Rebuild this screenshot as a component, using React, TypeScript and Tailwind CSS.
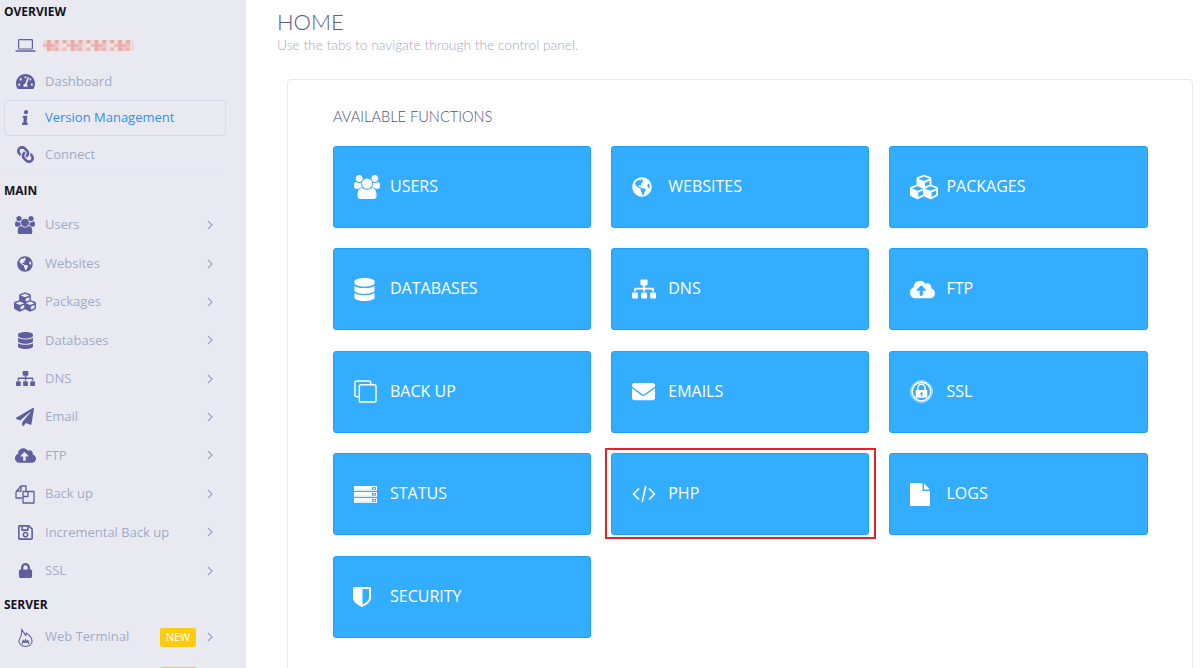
import React from "react";
import {
  FaGlobeAmericas, FaCubes, FaDatabase, FaSitemap, FaCloudUploadAlt, FaEnvelope,
  FaTachometerAlt, FaInfo, FaLink, FaPaperPlane, FaRegSave, FaLock,
} from "react-icons/fa";

const Users = ({ w }: { w: number }) => (
  <svg viewBox="0 0 1920 1792" width={w} height={(w * 1792) / 1920} fill="currentColor">
    <path d="M593 896q-162 5-265 128h-134q-82 0-138-40.5t-56-118.5q0-353 124-353 6 0 43.5 21t97.5 42.5 119 21.5q67 0 133-23-5 37-5 66 0 139 81 256zm1071 637q0 120-73 189.5t-194 69.5h-874q-121 0-194-69.5t-73-189.5q0-53 3.5-103.5t14-109 26.5-108.5 43-97.5 62-81 85.5-53.5 111.5-20q10 0 43 21.5t73 48 107 48 135 21.5 135-21.5 107-48 73-48 43-21.5q61 0 111.5 20t85.5 53.5 62 81 43 97.5 26.5 108.5 14 109 3.5 103.5zm-1024-1277q0 106-75 181t-181 75-181-75-75-181 75-181 181-75 181 75 75 181zm704 384q0 159-112.5 271.5t-271.5 112.5-271.5-112.5-112.5-271.5 112.5-271.5 271.5-112.5 271.5 112.5 112.5 271.5zm576 225q0 78-56 118.5t-138 40.5h-134q-103-123-265-128 81-117 81-256 0-29-5-66 66 23 133 23 59 0 119-21.5t97.5-42.5 43.5-21q124 0 124 353zm-128-609q0 106-75 181t-181 75-181-75-75-181 75-181 181-75 181 75 75 181z" />
  </svg>
);

const Laptop = () => (
  <svg viewBox="0 0 21 13" width="21" height="13" fill="none" stroke="currentColor" strokeWidth="1.2">
    <rect x="3.6" y="0.6" width="13.8" height="9.4" rx="0.8" />
    <path d="M0.5 12h20" strokeWidth="1.5" />
  </svg>
);

const Files = () => (
  <svg viewBox="0 0 20 20" width="20" height="20" fill="none" stroke="currentColor" strokeWidth="1.3" strokeLinejoin="round">
    <path d="M7 14H1V8l5-6h5v5" />
    <path d="M6 2v5H1.5" />
    <path d="M8 7.5h11v11.5H8z" />
    <path d="M13 7.5v5H8" />
  </svg>
);

const Flame = () => (
  <svg viewBox="0 0 16 20" width="15" height="19" fill="none" stroke="currentColor" strokeWidth="1.1" strokeLinejoin="round">
    <path d="M4 1c1 3 3 4 4 7 1-1 1-2 .7-3 3 2 6.3 6 6.3 9 0 3-3 5.500-7 5.500S1 17 1 14c0-2 1-3 2-5 .8-2 1.200-5 1-8z" />
    <path d="M4.500 17l1-4 1.500 2 1-3 1 3 1.500-2 1 4" />
    <path d="M4 15h8" />
  </svg>
);

const BackUp = () => (
  <svg viewBox="0 0 24 24" width="23" height="23" fill="none" stroke="currentColor" strokeWidth="1.500">
    <path d="M4.500 17.500H3a2 2 0 0 1-2-2V3a2 2 0 0 1 2-2h12.500a2 2 0 0 1 2 2v1.500" />
    <rect x="5.500" y="5" width="17.500" height="18" rx="2" />
  </svg>
);

const Status = () => (
  <svg viewBox="0 0 23 17" width="23" height="17">
    {[0.5, 6.5, 12.5].map((y) => (
      <g key={y}>
        <rect x="0.5" y={y} width="22" height="3.8" fill="none" stroke="currentColor" strokeWidth="1" />
        <rect x="1" y={y + 0.5} width="17" height="2.8" fill="currentColor" />
        <rect x="19.5" y={y + 1.2} width="1.5" height="1.5" fill="currentColor" />
      </g>
    ))}
  </svg>
);

const Code = () => (
  <svg viewBox="0 0 24 18" width="24" height="18" fill="none" stroke="currentColor" strokeWidth="1.6">
    <path d="M7 3.500 1.500 9 7 14.500M17 3.500 22.500 9 17 14.500M13.800 1 10.200 17" />
  </svg>
);

const Ssl = () => (
  <svg viewBox="0 0 24 24" width="23" height="23">
    <circle cx="12" cy="12" r="11.5" fill="none" stroke="currentColor" strokeWidth="0.8" opacity="0.75" />
    <circle cx="12" cy="12" r="9.8" fill="none" stroke="currentColor" strokeWidth="1.6" />
    <path d="M8.300 10.800V8.200a3.700 3.700 0 0 1 7.400 0v2.600" fill="none" stroke="currentColor" strokeWidth="1.500" />
    <path fillRule="evenodd" fill="currentColor" d="M6 10.500h12v8H6zM12 12.800a1.300 1.300 0 0 0-.7 2.400v1.700h1.400v-1.700a1.300 1.300 0 0 0-.7-2.400z" />
  </svg>
);

const Shield = () => (
  <svg viewBox="0 0 18 20" width="18" height="20">
    <path fill="currentColor" fillRule="evenodd" d="M0 0h18v11c0 4-5 7.500-9 9-4-1.500-9-5-9-9zM9.500 2v15.500c3-1.400 6.500-3.800 6.500-6.500V2z" />
  </svg>
);

const FileIcon = () => (
  <svg viewBox="0 0 20 23" width="20" height="23" fill="currentColor">
    <path d="M0 0h12.500v8H20v15H0z" />
    <path d="M14 0.500 20 6.500h-6z" />
  </svg>
);

const Pixels = () => {
  const c = ["#f0d8d8", "#e8b4b0", "#ebc2c0", "#e5a9a6", "#f3e3df", "#e9bcb9"];
  const cells: React.ReactElement[] = [];
  for (let y = 0; y < 3; y++)
    for (let x = 0; x < 23; x++) {
      const i = (x * 7 + y * 5 + (x % 3) * (y + 2)) % c.length;
      cells.push(<rect key={`${x}-${y}`} x={x * 4} y={y * 4} width="4" height="4" fill={c[i]} />);
    }
  return (
    <svg width="91" height="11" viewBox="0 0 92 12" preserveAspectRatio="none">
      {cells}
    </svg>
  );
};

const Icon = ({ children }: { children: React.ReactNode }) => (
  <span className="w-6 mr-2 shrink-0 flex items-center justify-center text-[#5f5f9f]">{children}</span>
);

const Chevron = ({ className = "" }: { className?: string }) => (
  <svg viewBox="0 0 6 10" width="6" height="10" fill="none" stroke="#9aa6c2" strokeWidth="1.2" className={className}>
    <path d="M1 1l4 4-4 4" />
  </svg>
);

const Item = ({ icon, label, active, arrow }: { icon: React.ReactNode; label: string; active?: boolean; arrow?: boolean }) => (
  <div
    className={`ml-1 w-[222px] flex items-center pl-2 pr-[12px] border rounded-[3px] text-[13px] ${
      arrow ? "h-[38.4px]" : "h-[36.4px]"
    } ${active ? "border-[#d6dbe9] text-[#2f8fee]" : "border-transparent text-[#a2abc6]"}`}
  >
    <Icon>{icon}</Icon>
    <span>{label}</span>
    {arrow && <Chevron className="ml-auto" />}
  </div>
);

const Label = ({ children, className = "" }: { children: React.ReactNode; className?: string }) => (
  <div className={`h-[22px] pl-1 pt-px flex items-center text-xs font-bold text-[#14101c] ${className}`}>{children}</div>
);

const cards: { icon: React.ReactNode; label: string; mark?: boolean }[] = [
  { icon: <Users w={26} />, label: "USERS" },
  { icon: <FaGlobeAmericas size={20} />, label: "WEBSITES" },
  { icon: <FaCubes size={28} />, label: "PACKAGES" },
  { icon: <FaDatabase size={23} className="-ml-[1.5px]" />, label: "DATABASES" },
  { icon: <FaSitemap size={24} />, label: "DNS" },
  { icon: <FaCloudUploadAlt size={25} />, label: "FTP" },
  { icon: <BackUp />, label: "BACK UP" },
  { icon: <FaEnvelope size={23} />, label: "EMAILS" },
  { icon: <Ssl />, label: "SSL" },
  { icon: <Status />, label: "STATUS" },
  { icon: <Code />, label: "PHP", mark: true },
  { icon: <FileIcon />, label: "LOGS" },
  { icon: <span className="-ml-px"><Shield /></span>, label: "SECURITY" },
];

export default function App() {
  return (
    <div className="flex w-[1200px] h-[668px] overflow-hidden bg-white font-['Open_Sans',sans-serif]">
      <aside className="w-[246px] shrink-0 bg-[#e9eaf1] overflow-hidden">
        <Label className="mb-[5px]">OVERVIEW</Label>
        <div className="ml-1 w-[222px] h-[36.4px] flex items-center pl-2 border border-transparent">
          <Icon><Laptop /></Icon>
          <span className="-ml-0.5"><Pixels /></span>
        </div>
        <Item icon={<FaTachometerAlt size={19} />} label="Dashboard" />
        <Item icon={<FaInfo size={15} className="-skew-x-6" />} label="Version Management" active />
        <Item icon={<FaLink size={17} className="-scale-x-100" />} label="Connect" />
        <div className="ml-1 w-[222px] mt-px mb-[5px] border-t border-[#e2e4ee]" />
        <Label className="mb-[4.4px]">MAIN</Label>
        <Item arrow icon={<Users w={20} />} label="Users" />
        <Item arrow icon={<FaGlobeAmericas size={16} />} label="Websites" />
        <Item arrow icon={<FaCubes size={22} />} label="Packages" />
        <Item arrow icon={<FaDatabase size={17} />} label="Databases" />
        <Item arrow icon={<FaSitemap size={19} />} label="DNS" />
        <Item arrow icon={<FaPaperPlane size={18} />} label="Email" />
        <Item arrow icon={<FaCloudUploadAlt size={21} />} label="FTP" />
        <Item arrow icon={<Files />} label="Back up" />
        <Item arrow icon={<FaRegSave size={17} />} label="Incremental Back up" />
        <Item arrow icon={<FaLock size={15} />} label="SSL" />
        <Label className="mt-[3.2px] mb-[3px]">SERVER</Label>
        <div className="ml-1 w-[222px] h-[38.4px] flex items-center pl-2 pr-[12px] border border-transparent text-[13px] text-[#a2abc6]">
          <Icon><Flame /></Icon>
          <span>Web Terminal</span>
          <span className="ml-auto mr-[11px] w-9 h-[19px] flex items-center justify-center rounded-[2px] bg-[#ffcc0d] text-white text-[11px]">NEW</span>
          <Chevron />
        </div>
        <div className="ml-1 w-[222px] h-[38.4px] pt-[10px] pl-[155px] border border-transparent">
          <span className="block w-9 h-[19px] rounded-[2px] bg-[#ffcc0d]" />
        </div>
      </aside>
      <main className="flex-1 min-w-0 pl-[31px] pr-[7px]">
        <h1 className="mt-[9px] h-[26px] leading-[26px] text-[22px] font-light text-[#5a5a8c] font-['Lato',sans-serif]">HOME</h1>
        <p className="h-[17px] leading-[17px] mt-px text-[13.75px] font-light text-[#a9a9c0] font-['Lato',sans-serif]">Use the tabs to navigate through the control panel.</p>
        <section className="mt-[26px] ml-[10px] h-[640px] pt-[28px] pl-[45px] pr-[44.3px] border border-[#e9eaf1] rounded-[4px]">
          <h2 className="h-[18px] leading-[18px] text-[14.6px] font-light text-[#4f4f85] font-['Lato',sans-serif]">AVAILABLE FUNCTIONS</h2>
          <div className="mt-[20px] grid grid-cols-3 gap-x-5 gap-y-[20.4px]">
            {cards.map((c) => (
              <div key={c.label} className="relative h-[82px] flex items-center pl-[20px] bg-[#33adff] border border-[#1c9fff] rounded-[3px] text-white">
                <span className="w-[36px] shrink-0 flex items-center">{c.icon}</span>
                <span className="text-base -mt-0.5">{c.label}</span>
                {c.mark && <span className="absolute -left-[7px] -top-[6px] -right-[8px] -bottom-[5px] border-2 border-[#e8202a]" />}
              </div>
            ))}
          </div>
        </section>
      </main>
    </div>
  );
}
